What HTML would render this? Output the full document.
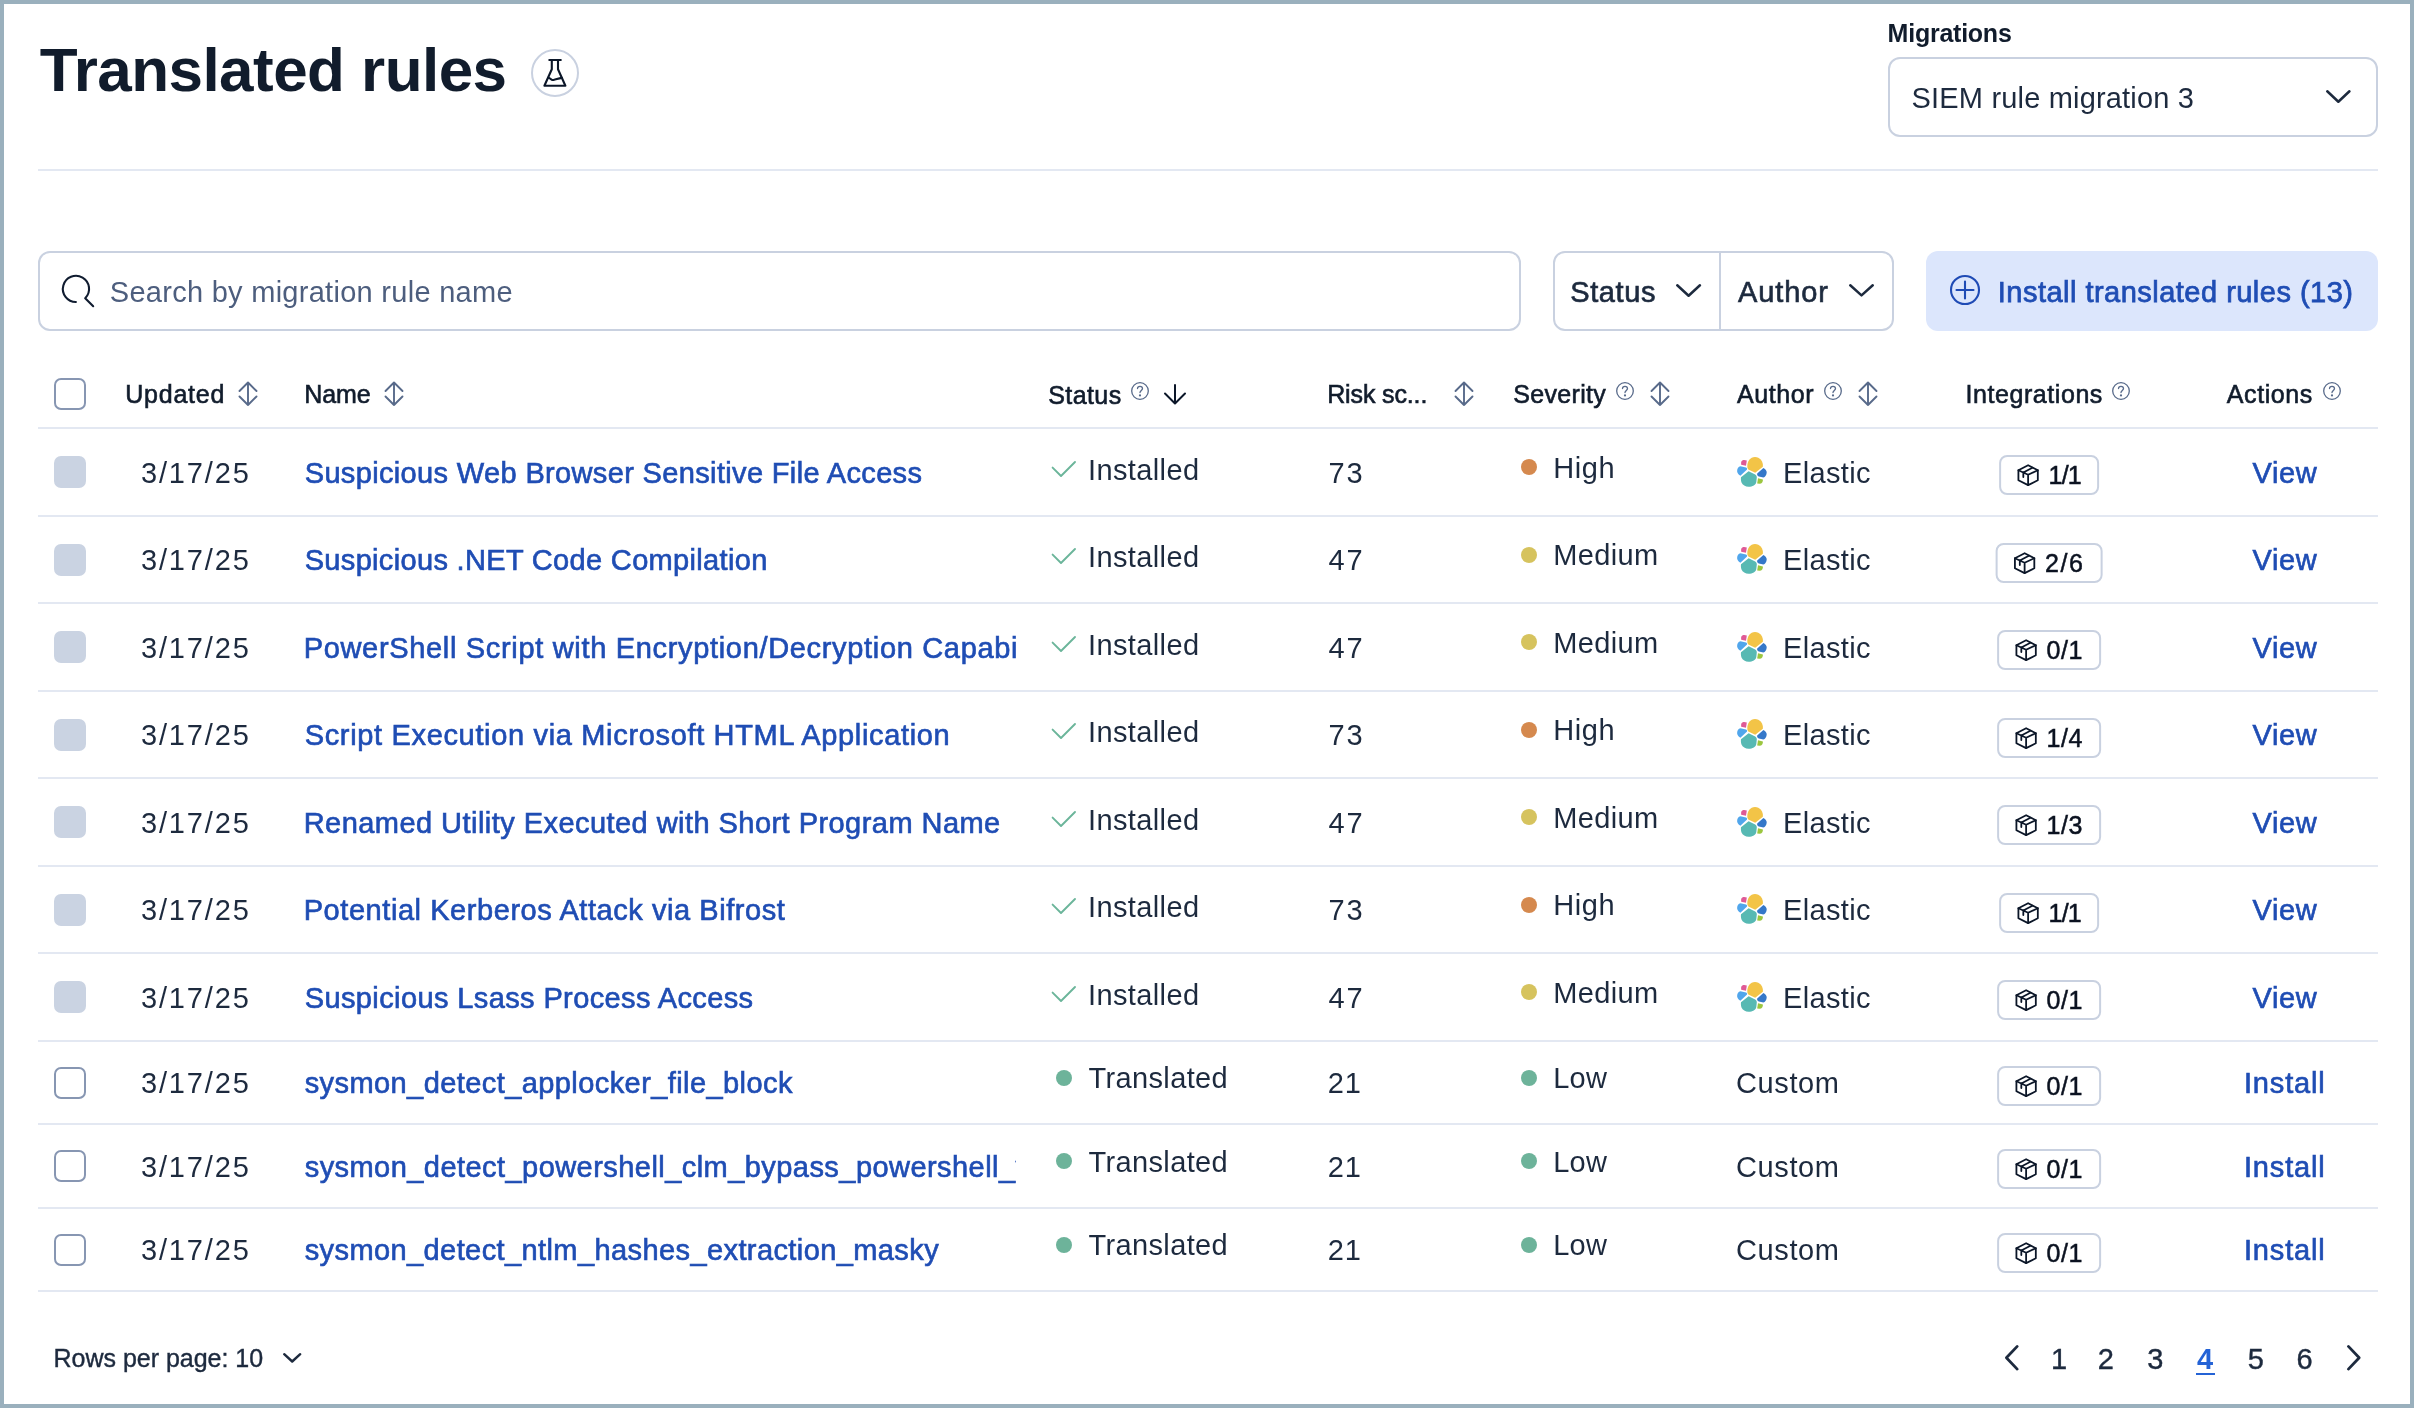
<!DOCTYPE html>
<html><head><meta charset="utf-8"><title>Translated rules</title>
<style>
html,body{margin:0;padding:0}
body{width:2414px;height:1408px;position:relative;overflow:hidden;background:#9AB0BD;font-family:"Liberation Sans", sans-serif}
#panel{position:absolute;left:4px;top:4px;width:2406px;height:1400px;background:#FFFFFF}
#root{position:absolute;left:0;top:0;width:2414px;height:1408px;will-change:transform}
.t{position:absolute;white-space:nowrap}
svg{overflow:visible}
</style></head><body>
<div id="panel"></div>
<div id="root"><div class="t" style="left:39.80px;top:39px;font-size:62px;line-height:62px;color:#111C2C;font-weight:700;letter-spacing:-0.553px;">Translated rules</div>
<div style="position:absolute;left:531px;top:49px;width:48px;height:48px;box-sizing:border-box;border:2px solid #C9D1E0;border-radius:50%"></div>
<svg style="position:absolute;left:531px;top:49px;" width="48" height="48" viewBox="0 0 48 48" fill="none"><g stroke="#0B1628" stroke-width="2.1" stroke-linejoin="round" stroke-linecap="round"><path d="M18.3 11 H29.8"/><path d="M20.8 11 V20.3 L13.4 36.8 H34.4 L27 20.3 V11"/><path d="M17.4 28.8 C19.5 29.3 20.8 31.3 22.5 31 C25.5 30.5 27 29.3 30.8 28.9"/></g></svg>
<div class="t" style="left:1887.60px;top:21px;font-size:25px;line-height:25px;color:#111C2C;font-weight:700;letter-spacing:-0.244px;">Migrations</div>
<div style="position:absolute;left:1888px;top:57px;width:490px;height:80px;box-sizing:border-box;border:2px solid #C9D1E0;border-radius:12px;background:#fff"></div>
<div class="t" style="left:1911.60px;top:84px;font-size:29px;line-height:29px;color:#1D2A3E;font-weight:400;letter-spacing:0.175px;">SIEM rule migration 3</div>
<svg style="position:absolute;left:2325.6px;top:90.1px;" width="25" height="13" viewBox="0 0 25 13" fill="none"><path d="M1.25 1.25 L12.35 11.75 L23.45 1.25" stroke="#1D2A3E" stroke-width="2.5" stroke-linecap="round" stroke-linejoin="round"/></svg>
<div style="position:absolute;left:38px;top:169px;width:2340px;height:2px;box-sizing:border-box;background:#E3E8F2"></div>
<div style="position:absolute;left:38px;top:251px;width:1483px;height:80px;box-sizing:border-box;border:2px solid #C9D1E0;border-radius:12px;background:#fff"></div>
<svg style="position:absolute;left:55px;top:268px;" width="46" height="46" viewBox="0 0 46 46" fill="none"><path d="M20.9 34 A13.1 13.1 0 1 1 30.2 30.2 L38.2 38.2" stroke="#101C30" stroke-width="2.1" stroke-linecap="round" stroke-linejoin="round"/></svg>
<div class="t" style="left:109.80px;top:278px;font-size:29px;line-height:29px;color:#4D5E7E;font-weight:400;letter-spacing:0.279px;">Search by migration rule name</div>
<div style="position:absolute;left:1553px;top:251px;width:341px;height:80px;box-sizing:border-box;border:2px solid #C9D1E0;border-radius:12px;background:#fff"></div>
<div style="position:absolute;left:1719px;top:251px;width:2px;height:80px;box-sizing:border-box;background:#C9D1E0"></div>
<div class="t" style="left:1570.20px;top:278px;font-size:29px;line-height:29px;color:#1D2A3E;font-weight:400;letter-spacing:0.600px;-webkit-text-stroke:0.65px #1D2A3E;">Status</div>
<svg style="position:absolute;left:1676.1px;top:284.1px;" width="26" height="13" viewBox="0 0 26 13" fill="none"><path d="M1.25 1.25 L12.60 11.75 L23.95 1.25" stroke="#1D2A3E" stroke-width="2.5" stroke-linecap="round" stroke-linejoin="round"/></svg>
<div class="t" style="left:1738.00px;top:278px;font-size:29px;line-height:29px;color:#1D2A3E;font-weight:400;letter-spacing:0.900px;-webkit-text-stroke:0.65px #1D2A3E;">Author</div>
<svg style="position:absolute;left:1849.3px;top:284.4px;" width="25" height="13" viewBox="0 0 25 13" fill="none"><path d="M1.25 1.25 L12.50 11.35 L23.75 1.25" stroke="#1D2A3E" stroke-width="2.5" stroke-linecap="round" stroke-linejoin="round"/></svg>
<div style="position:absolute;left:1926px;top:251px;width:452px;height:80px;box-sizing:border-box;background:#DCE6FC;border-radius:12px"></div>
<svg style="position:absolute;left:1946px;top:271px;" width="38" height="38" viewBox="0 0 38 38" fill="none"><g stroke="#1F4BB5" stroke-width="2.1" stroke-linecap="round"><circle cx="19" cy="19" r="14"/><path d="M19 10.5 V27.5 M10.5 19 H27.5"/></g></svg>
<div class="t" style="left:1997.80px;top:278px;font-size:29px;line-height:29px;color:#1F4DB4;font-weight:400;letter-spacing:0.479px;-webkit-text-stroke:0.75px #1F4DB4;">Install translated rules (13)</div>
<div style="position:absolute;left:54px;top:378px;width:32px;height:32px;box-sizing:border-box;border:2px solid #8796B2;border-radius:7px;background:#fff"></div>
<div class="t" style="left:125.20px;top:382px;font-size:25px;line-height:25px;color:#111C2C;font-weight:400;letter-spacing:0.783px;-webkit-text-stroke:0.6px #111C2C;">Updated</div>
<svg style="position:absolute;left:238px;top:381px;" width="20" height="26" viewBox="0 0 20 26" fill="none"><g stroke="#586A8A" stroke-width="1.9" stroke-linecap="round" stroke-linejoin="round"><path d="M1.5 10 L10 1.5 L18.5 10 M10 1.5 V24 M1.5 15.5 L10 24 L18.5 15.5"/></g></svg>
<div class="t" style="left:304.20px;top:382px;font-size:25px;line-height:25px;color:#111C2C;font-weight:400;letter-spacing:-0.033px;-webkit-text-stroke:0.6px #111C2C;">Name</div>
<svg style="position:absolute;left:384px;top:381px;" width="20" height="26" viewBox="0 0 20 26" fill="none"><g stroke="#586A8A" stroke-width="1.9" stroke-linecap="round" stroke-linejoin="round"><path d="M1.5 10 L10 1.5 L18.5 10 M10 1.5 V24 M1.5 15.5 L10 24 L18.5 15.5"/></g></svg>
<div class="t" style="left:1048.20px;top:383px;font-size:25px;line-height:25px;color:#111C2C;font-weight:400;letter-spacing:0.420px;-webkit-text-stroke:0.6px #111C2C;">Status</div>
<svg style="position:absolute;left:1129.8px;top:381px;" width="20" height="20" viewBox="0 0 20 20" fill="none"><g stroke="#586A8A" stroke-width="1.3" stroke-linecap="round"><circle cx="10" cy="10" r="8.3"/><path d="M7.5 7.6 C7.5 4.6 12.5 4.6 12.5 7.6 C12.5 9.3 10 9.6 10 11.6"/></g><circle cx="10" cy="14.4" r="1.1" fill="#586A8A"/></svg>
<svg style="position:absolute;left:1162px;top:382px;" width="26" height="24" viewBox="0 0 26 24" fill="none"><g stroke="#0B1628" stroke-width="2" stroke-linecap="round" stroke-linejoin="round"><path d="M13 3 V21 M3 11.5 L13 21.5 L23 11.5"/></g></svg>
<div class="t" style="left:1327.20px;top:382px;font-size:25px;line-height:25px;color:#111C2C;font-weight:400;letter-spacing:-0.133px;-webkit-text-stroke:0.6px #111C2C;">Risk sc...</div>
<svg style="position:absolute;left:1454px;top:381px;" width="20" height="26" viewBox="0 0 20 26" fill="none"><g stroke="#586A8A" stroke-width="1.9" stroke-linecap="round" stroke-linejoin="round"><path d="M1.5 10 L10 1.5 L18.5 10 M10 1.5 V24 M1.5 15.5 L10 24 L18.5 15.5"/></g></svg>
<div class="t" style="left:1513.20px;top:382px;font-size:25px;line-height:25px;color:#111C2C;font-weight:400;letter-spacing:0.329px;-webkit-text-stroke:0.6px #111C2C;">Severity</div>
<svg style="position:absolute;left:1615px;top:381px;" width="20" height="20" viewBox="0 0 20 20" fill="none"><g stroke="#586A8A" stroke-width="1.3" stroke-linecap="round"><circle cx="10" cy="10" r="8.3"/><path d="M7.5 7.6 C7.5 4.6 12.5 4.6 12.5 7.6 C12.5 9.3 10 9.6 10 11.6"/></g><circle cx="10" cy="14.4" r="1.1" fill="#586A8A"/></svg>
<svg style="position:absolute;left:1650px;top:381px;" width="20" height="26" viewBox="0 0 20 26" fill="none"><g stroke="#586A8A" stroke-width="1.9" stroke-linecap="round" stroke-linejoin="round"><path d="M1.5 10 L10 1.5 L18.5 10 M10 1.5 V24 M1.5 15.5 L10 24 L18.5 15.5"/></g></svg>
<div class="t" style="left:1737.00px;top:382px;font-size:25px;line-height:25px;color:#111C2C;font-weight:400;letter-spacing:0.560px;-webkit-text-stroke:0.6px #111C2C;">Author</div>
<svg style="position:absolute;left:1823px;top:381px;" width="20" height="20" viewBox="0 0 20 20" fill="none"><g stroke="#586A8A" stroke-width="1.3" stroke-linecap="round"><circle cx="10" cy="10" r="8.3"/><path d="M7.5 7.6 C7.5 4.6 12.5 4.6 12.5 7.6 C12.5 9.3 10 9.6 10 11.6"/></g><circle cx="10" cy="14.4" r="1.1" fill="#586A8A"/></svg>
<svg style="position:absolute;left:1858px;top:381px;" width="20" height="26" viewBox="0 0 20 26" fill="none"><g stroke="#586A8A" stroke-width="1.9" stroke-linecap="round" stroke-linejoin="round"><path d="M1.5 10 L10 1.5 L18.5 10 M10 1.5 V24 M1.5 15.5 L10 24 L18.5 15.5"/></g></svg>
<div class="t" style="left:1965.60px;top:382px;font-size:25px;line-height:25px;color:#111C2C;font-weight:400;letter-spacing:0.555px;-webkit-text-stroke:0.6px #111C2C;">Integrations</div>
<svg style="position:absolute;left:2111px;top:381px;" width="20" height="20" viewBox="0 0 20 20" fill="none"><g stroke="#586A8A" stroke-width="1.3" stroke-linecap="round"><circle cx="10" cy="10" r="8.3"/><path d="M7.5 7.6 C7.5 4.6 12.5 4.6 12.5 7.6 C12.5 9.3 10 9.6 10 11.6"/></g><circle cx="10" cy="14.4" r="1.1" fill="#586A8A"/></svg>
<div class="t" style="left:2226.80px;top:382px;font-size:25px;line-height:25px;color:#111C2C;font-weight:400;letter-spacing:0.583px;-webkit-text-stroke:0.6px #111C2C;">Actions</div>
<svg style="position:absolute;left:2322px;top:381px;" width="20" height="20" viewBox="0 0 20 20" fill="none"><g stroke="#586A8A" stroke-width="1.3" stroke-linecap="round"><circle cx="10" cy="10" r="8.3"/><path d="M7.5 7.6 C7.5 4.6 12.5 4.6 12.5 7.6 C12.5 9.3 10 9.6 10 11.6"/></g><circle cx="10" cy="14.4" r="1.1" fill="#586A8A"/></svg>
<div style="position:absolute;left:38px;top:427px;width:2340px;height:2px;box-sizing:border-box;background:#E3E8F2"></div>
<div style="position:absolute;left:54px;top:456px;width:32px;height:32px;box-sizing:border-box;background:#CAD3E2;border-radius:7px"></div>
<div class="t" style="left:140.90px;top:459px;font-size:29px;line-height:29px;color:#1D2A3E;font-weight:400;letter-spacing:1.875px;">3/17/25</div>
<div style="position:absolute;left:290px;top:429px;width:726px;height:86px;overflow:hidden"><div class="t" style="left:14.70px;top:30px;font-size:29px;line-height:29px;color:#1F4DB4;font-weight:400;-webkit-text-stroke:0.65px #1F4DB4;letter-spacing:0.349px">Suspicious Web Browser Sensitive File Access</div></div>
<svg style="position:absolute;left:1050px;top:460px;" width="28" height="20" viewBox="0 0 28 20" fill="none"><path d="M2.6 7.6 L11 16 L25 2" stroke="#6BB59A" stroke-width="1.9" stroke-linecap="round" stroke-linejoin="round"/></svg>
<div class="t" style="left:1088.00px;top:456px;font-size:29px;line-height:29px;color:#1D2A3E;font-weight:400;letter-spacing:0.375px;">Installed</div>
<div class="t" style="left:1328.40px;top:459px;font-size:29px;line-height:29px;color:#1D2A3E;font-weight:400;letter-spacing:1.900px;">73</div>
<div style="position:absolute;left:1521px;top:459.0px;width:16px;height:16px;border-radius:50%;background:#D5894E"></div>
<div class="t" style="left:1553.20px;top:454px;font-size:29px;line-height:29px;color:#1D2A3E;font-weight:400;letter-spacing:0.600px;">High</div>
<svg style="position:absolute;left:1737px;top:457px;" width="31" height="31" viewBox="0 0 31 31" fill="none"><path d="M18 0.1 C13 0.1 10.3 4.5 10.3 9.3 C10.3 10.8 10.8 12 11.3 12.6 L18.2 15.7 L25.9 9.8 C26.4 4.5 22.8 0.1 18 0.1 Z" fill="#F3C447"/><path d="M4.4 4.4 C5.2 3.3 6.2 2.9 7.2 2.9 L9.8 3.4 L9 8.8 L4.2 7.8 C4 6.5 4.1 5 4.4 4.4 Z" fill="#DF5A96"/><path d="M3.4 9.3 L9 10.6 C10.3 11.2 10.2 12.2 9.8 12.8 L3.4 18.8 C1.2 17.5 0.1 15.5 0.1 13.9 C0.1 11.5 1.5 9.5 3.4 9.3 Z" fill="#51A6EC"/><path d="M11.6 14.2 L18.2 17.4 C19.5 18.3 19.9 19.5 19.8 20.5 L19.3 25 C19 28 15.5 29.8 11.6 29.8 C8.5 29.8 5.5 27.8 4.5 25.5 C3.8 23.5 3.8 21.5 4.0 20.2 Z" fill="#57B9B3"/><path d="M26.4 11.1 C28 11.8 29.7 13.5 29.7 15.4 C29.7 18 28 20 26.4 20.6 L21.8 19.6 C20.5 19.2 19.8 17.8 20.2 16.6 Z" fill="#3578C9"/><path d="M21 21.3 L25.9 22.4 C26.2 24.5 24.8 26.7 22.5 26.7 L20.2 26.6 Z" fill="#9BC63F"/></svg>
<div class="t" style="left:1783.00px;top:459px;font-size:29px;line-height:29px;color:#1D2A3E;font-weight:400;letter-spacing:0.350px;">Elastic</div>
<div style="position:absolute;left:2049px;top:455px;height:40px;transform:translateX(-50%);box-sizing:border-box;border:2px solid #C9D1E0;border-radius:8px;background:#fff;display:flex;align-items:center;padding:0 16px 0 16px"><svg width="22" height="23" viewBox="0 0 22 23" fill="none" style="display:block;flex:none"><g stroke="#0B1628" stroke-width="1.8" stroke-linejoin="round" stroke-linecap="round"><path d="M1.3 6.2 L11 1.2 L20.7 6.2 V16.3 L11 21.1 L1.3 16.3 Z"/><path d="M1.3 6.2 L11 10.8 L20.7 6.2 M11 10.8 V21.1 M6.2 8.5 L15.3 3.7 M6.2 8.5 V13"/></g></svg><span style="display:block;margin-left:9.5px;font-size:25px;line-height:25px;height:25px;position:relative;top:0.5px;color:#0B1220;letter-spacing:-0.83px;-webkit-text-stroke:0.5px #0B1220;white-space:nowrap">1/1</span></div>
<div class="t" style="left:2252.60px;top:459px;font-size:29px;line-height:29px;color:#1F4DB4;font-weight:400;letter-spacing:0.567px;-webkit-text-stroke:0.65px #1F4DB4;">View</div>
<div style="position:absolute;left:38px;top:515px;width:2340px;height:2px;box-sizing:border-box;background:#E3E8F2"></div>
<div style="position:absolute;left:54px;top:544px;width:32px;height:32px;box-sizing:border-box;background:#CAD3E2;border-radius:7px"></div>
<div class="t" style="left:140.90px;top:546px;font-size:29px;line-height:29px;color:#1D2A3E;font-weight:400;letter-spacing:1.875px;">3/17/25</div>
<div style="position:absolute;left:290px;top:517px;width:726px;height:85px;overflow:hidden"><div class="t" style="left:14.70px;top:29px;font-size:29px;line-height:29px;color:#1F4DB4;font-weight:400;-webkit-text-stroke:0.65px #1F4DB4;letter-spacing:0.329px">Suspicious .NET Code Compilation</div></div>
<svg style="position:absolute;left:1050px;top:547px;" width="28" height="20" viewBox="0 0 28 20" fill="none"><path d="M2.6 7.6 L11 16 L25 2" stroke="#6BB59A" stroke-width="1.9" stroke-linecap="round" stroke-linejoin="round"/></svg>
<div class="t" style="left:1088.00px;top:543px;font-size:29px;line-height:29px;color:#1D2A3E;font-weight:400;letter-spacing:0.375px;">Installed</div>
<div class="t" style="left:1328.40px;top:546px;font-size:29px;line-height:29px;color:#1D2A3E;font-weight:400;letter-spacing:1.900px;">47</div>
<div style="position:absolute;left:1521px;top:546.5px;width:16px;height:16px;border-radius:50%;background:#D6C35E"></div>
<div class="t" style="left:1553.20px;top:541px;font-size:29px;line-height:29px;color:#1D2A3E;font-weight:400;letter-spacing:0.360px;">Medium</div>
<svg style="position:absolute;left:1737px;top:544px;" width="31" height="31" viewBox="0 0 31 31" fill="none"><path d="M18 0.1 C13 0.1 10.3 4.5 10.3 9.3 C10.3 10.8 10.8 12 11.3 12.6 L18.2 15.7 L25.9 9.8 C26.4 4.5 22.8 0.1 18 0.1 Z" fill="#F3C447"/><path d="M4.4 4.4 C5.2 3.3 6.2 2.9 7.2 2.9 L9.8 3.4 L9 8.8 L4.2 7.8 C4 6.5 4.1 5 4.4 4.4 Z" fill="#DF5A96"/><path d="M3.4 9.3 L9 10.6 C10.3 11.2 10.2 12.2 9.8 12.8 L3.4 18.8 C1.2 17.5 0.1 15.5 0.1 13.9 C0.1 11.5 1.5 9.5 3.4 9.3 Z" fill="#51A6EC"/><path d="M11.6 14.2 L18.2 17.4 C19.5 18.3 19.9 19.5 19.8 20.5 L19.3 25 C19 28 15.5 29.8 11.6 29.8 C8.5 29.8 5.5 27.8 4.5 25.5 C3.8 23.5 3.8 21.5 4.0 20.2 Z" fill="#57B9B3"/><path d="M26.4 11.1 C28 11.8 29.7 13.5 29.7 15.4 C29.7 18 28 20 26.4 20.6 L21.8 19.6 C20.5 19.2 19.8 17.8 20.2 16.6 Z" fill="#3578C9"/><path d="M21 21.3 L25.9 22.4 C26.2 24.5 24.8 26.7 22.5 26.7 L20.2 26.6 Z" fill="#9BC63F"/></svg>
<div class="t" style="left:1783.00px;top:546px;font-size:29px;line-height:29px;color:#1D2A3E;font-weight:400;letter-spacing:0.350px;">Elastic</div>
<div style="position:absolute;left:2049px;top:543px;height:40px;transform:translateX(-50%);box-sizing:border-box;border:2px solid #C9D1E0;border-radius:8px;background:#fff;display:flex;align-items:center;padding:0 16px 0 16px"><svg width="22" height="23" viewBox="0 0 22 23" fill="none" style="display:block;flex:none"><g stroke="#0B1628" stroke-width="1.8" stroke-linejoin="round" stroke-linecap="round"><path d="M1.3 6.2 L11 1.2 L20.7 6.2 V16.3 L11 21.1 L1.3 16.3 Z"/><path d="M1.3 6.2 L11 10.8 L20.7 6.2 M11 10.8 V21.1 M6.2 8.5 L15.3 3.7 M6.2 8.5 V13"/></g></svg><span style="display:block;margin-left:9.5px;font-size:25px;line-height:25px;height:25px;position:relative;top:0.5px;color:#0B1220;letter-spacing:1.5px;-webkit-text-stroke:0.5px #0B1220;white-space:nowrap">2/6</span></div>
<div class="t" style="left:2252.60px;top:546px;font-size:29px;line-height:29px;color:#1F4DB4;font-weight:400;letter-spacing:0.567px;-webkit-text-stroke:0.65px #1F4DB4;">View</div>
<div style="position:absolute;left:38px;top:602px;width:2340px;height:2px;box-sizing:border-box;background:#E3E8F2"></div>
<div style="position:absolute;left:54px;top:631px;width:32px;height:32px;box-sizing:border-box;background:#CAD3E2;border-radius:7px"></div>
<div class="t" style="left:140.90px;top:634px;font-size:29px;line-height:29px;color:#1D2A3E;font-weight:400;letter-spacing:1.875px;">3/17/25</div>
<div style="position:absolute;left:290px;top:604px;width:726px;height:86px;overflow:hidden"><div class="t" style="left:13.70px;top:30px;font-size:29px;line-height:29px;color:#1F4DB4;font-weight:400;-webkit-text-stroke:0.65px #1F4DB4;letter-spacing:0.672px">PowerShell Script with Encryption/Decryption Capabilities</div></div>
<svg style="position:absolute;left:1050px;top:635px;" width="28" height="20" viewBox="0 0 28 20" fill="none"><path d="M2.6 7.6 L11 16 L25 2" stroke="#6BB59A" stroke-width="1.9" stroke-linecap="round" stroke-linejoin="round"/></svg>
<div class="t" style="left:1088.00px;top:631px;font-size:29px;line-height:29px;color:#1D2A3E;font-weight:400;letter-spacing:0.375px;">Installed</div>
<div class="t" style="left:1328.40px;top:634px;font-size:29px;line-height:29px;color:#1D2A3E;font-weight:400;letter-spacing:1.900px;">47</div>
<div style="position:absolute;left:1521px;top:634.0px;width:16px;height:16px;border-radius:50%;background:#D6C35E"></div>
<div class="t" style="left:1553.20px;top:629px;font-size:29px;line-height:29px;color:#1D2A3E;font-weight:400;letter-spacing:0.360px;">Medium</div>
<svg style="position:absolute;left:1737px;top:632px;" width="31" height="31" viewBox="0 0 31 31" fill="none"><path d="M18 0.1 C13 0.1 10.3 4.5 10.3 9.3 C10.3 10.8 10.8 12 11.3 12.6 L18.2 15.7 L25.9 9.8 C26.4 4.5 22.8 0.1 18 0.1 Z" fill="#F3C447"/><path d="M4.4 4.4 C5.2 3.3 6.2 2.9 7.2 2.9 L9.8 3.4 L9 8.8 L4.2 7.8 C4 6.5 4.1 5 4.4 4.4 Z" fill="#DF5A96"/><path d="M3.4 9.3 L9 10.6 C10.3 11.2 10.2 12.2 9.8 12.8 L3.4 18.8 C1.2 17.5 0.1 15.5 0.1 13.9 C0.1 11.5 1.5 9.5 3.4 9.3 Z" fill="#51A6EC"/><path d="M11.6 14.2 L18.2 17.4 C19.5 18.3 19.9 19.5 19.8 20.5 L19.3 25 C19 28 15.5 29.8 11.6 29.8 C8.5 29.8 5.5 27.8 4.5 25.5 C3.8 23.5 3.8 21.5 4.0 20.2 Z" fill="#57B9B3"/><path d="M26.4 11.1 C28 11.8 29.7 13.5 29.7 15.4 C29.7 18 28 20 26.4 20.6 L21.8 19.6 C20.5 19.2 19.8 17.8 20.2 16.6 Z" fill="#3578C9"/><path d="M21 21.3 L25.9 22.4 C26.2 24.5 24.8 26.7 22.5 26.7 L20.2 26.6 Z" fill="#9BC63F"/></svg>
<div class="t" style="left:1783.00px;top:634px;font-size:29px;line-height:29px;color:#1D2A3E;font-weight:400;letter-spacing:0.350px;">Elastic</div>
<div style="position:absolute;left:2049px;top:630px;height:40px;transform:translateX(-50%);box-sizing:border-box;border:2px solid #C9D1E0;border-radius:8px;background:#fff;display:flex;align-items:center;padding:0 16px 0 16px"><svg width="22" height="23" viewBox="0 0 22 23" fill="none" style="display:block;flex:none"><g stroke="#0B1628" stroke-width="1.8" stroke-linejoin="round" stroke-linecap="round"><path d="M1.3 6.2 L11 1.2 L20.7 6.2 V16.3 L11 21.1 L1.3 16.3 Z"/><path d="M1.3 6.2 L11 10.8 L20.7 6.2 M11 10.8 V21.1 M6.2 8.5 L15.3 3.7 M6.2 8.5 V13"/></g></svg><span style="display:block;margin-left:9.5px;font-size:25px;line-height:25px;height:25px;position:relative;top:0.5px;color:#0B1220;letter-spacing:0.5px;-webkit-text-stroke:0.5px #0B1220;white-space:nowrap">0/1</span></div>
<div class="t" style="left:2252.60px;top:634px;font-size:29px;line-height:29px;color:#1F4DB4;font-weight:400;letter-spacing:0.567px;-webkit-text-stroke:0.65px #1F4DB4;">View</div>
<div style="position:absolute;left:38px;top:690px;width:2340px;height:2px;box-sizing:border-box;background:#E3E8F2"></div>
<div style="position:absolute;left:54px;top:719px;width:32px;height:32px;box-sizing:border-box;background:#CAD3E2;border-radius:7px"></div>
<div class="t" style="left:140.90px;top:721px;font-size:29px;line-height:29px;color:#1D2A3E;font-weight:400;letter-spacing:1.875px;">3/17/25</div>
<div style="position:absolute;left:290px;top:692px;width:726px;height:85px;overflow:hidden"><div class="t" style="left:14.70px;top:29px;font-size:29px;line-height:29px;color:#1F4DB4;font-weight:400;-webkit-text-stroke:0.65px #1F4DB4;letter-spacing:0.661px">Script Execution via Microsoft HTML Application</div></div>
<svg style="position:absolute;left:1050px;top:722px;" width="28" height="20" viewBox="0 0 28 20" fill="none"><path d="M2.6 7.6 L11 16 L25 2" stroke="#6BB59A" stroke-width="1.9" stroke-linecap="round" stroke-linejoin="round"/></svg>
<div class="t" style="left:1088.00px;top:718px;font-size:29px;line-height:29px;color:#1D2A3E;font-weight:400;letter-spacing:0.375px;">Installed</div>
<div class="t" style="left:1328.40px;top:721px;font-size:29px;line-height:29px;color:#1D2A3E;font-weight:400;letter-spacing:1.900px;">73</div>
<div style="position:absolute;left:1521px;top:721.5px;width:16px;height:16px;border-radius:50%;background:#D5894E"></div>
<div class="t" style="left:1553.20px;top:716px;font-size:29px;line-height:29px;color:#1D2A3E;font-weight:400;letter-spacing:0.600px;">High</div>
<svg style="position:absolute;left:1737px;top:719px;" width="31" height="31" viewBox="0 0 31 31" fill="none"><path d="M18 0.1 C13 0.1 10.3 4.5 10.3 9.3 C10.3 10.8 10.8 12 11.3 12.6 L18.2 15.7 L25.9 9.8 C26.4 4.5 22.8 0.1 18 0.1 Z" fill="#F3C447"/><path d="M4.4 4.4 C5.2 3.3 6.2 2.9 7.2 2.9 L9.8 3.4 L9 8.8 L4.2 7.8 C4 6.5 4.1 5 4.4 4.4 Z" fill="#DF5A96"/><path d="M3.4 9.3 L9 10.6 C10.3 11.2 10.2 12.2 9.8 12.8 L3.4 18.8 C1.2 17.5 0.1 15.5 0.1 13.9 C0.1 11.5 1.5 9.5 3.4 9.3 Z" fill="#51A6EC"/><path d="M11.6 14.2 L18.2 17.4 C19.5 18.3 19.9 19.5 19.8 20.5 L19.3 25 C19 28 15.5 29.8 11.6 29.8 C8.5 29.8 5.5 27.8 4.5 25.5 C3.8 23.5 3.8 21.5 4.0 20.2 Z" fill="#57B9B3"/><path d="M26.4 11.1 C28 11.8 29.7 13.5 29.7 15.4 C29.7 18 28 20 26.4 20.6 L21.8 19.6 C20.5 19.2 19.8 17.8 20.2 16.6 Z" fill="#3578C9"/><path d="M21 21.3 L25.9 22.4 C26.2 24.5 24.8 26.7 22.5 26.7 L20.2 26.6 Z" fill="#9BC63F"/></svg>
<div class="t" style="left:1783.00px;top:721px;font-size:29px;line-height:29px;color:#1D2A3E;font-weight:400;letter-spacing:0.350px;">Elastic</div>
<div style="position:absolute;left:2049px;top:718px;height:40px;transform:translateX(-50%);box-sizing:border-box;border:2px solid #C9D1E0;border-radius:8px;background:#fff;display:flex;align-items:center;padding:0 16px 0 16px"><svg width="22" height="23" viewBox="0 0 22 23" fill="none" style="display:block;flex:none"><g stroke="#0B1628" stroke-width="1.8" stroke-linejoin="round" stroke-linecap="round"><path d="M1.3 6.2 L11 1.2 L20.7 6.2 V16.3 L11 21.1 L1.3 16.3 Z"/><path d="M1.3 6.2 L11 10.8 L20.7 6.2 M11 10.8 V21.1 M6.2 8.5 L15.3 3.7 M6.2 8.5 V13"/></g></svg><span style="display:block;margin-left:9.5px;font-size:25px;line-height:25px;height:25px;position:relative;top:0.5px;color:#0B1220;letter-spacing:0.5px;-webkit-text-stroke:0.5px #0B1220;white-space:nowrap">1/4</span></div>
<div class="t" style="left:2252.60px;top:721px;font-size:29px;line-height:29px;color:#1F4DB4;font-weight:400;letter-spacing:0.567px;-webkit-text-stroke:0.65px #1F4DB4;">View</div>
<div style="position:absolute;left:38px;top:777px;width:2340px;height:2px;box-sizing:border-box;background:#E3E8F2"></div>
<div style="position:absolute;left:54px;top:806px;width:32px;height:32px;box-sizing:border-box;background:#CAD3E2;border-radius:7px"></div>
<div class="t" style="left:140.90px;top:809px;font-size:29px;line-height:29px;color:#1D2A3E;font-weight:400;letter-spacing:1.875px;">3/17/25</div>
<div style="position:absolute;left:290px;top:779px;width:726px;height:86px;overflow:hidden"><div class="t" style="left:13.70px;top:30px;font-size:29px;line-height:29px;color:#1F4DB4;font-weight:400;-webkit-text-stroke:0.65px #1F4DB4;letter-spacing:0.451px">Renamed Utility Executed with Short Program Name</div></div>
<svg style="position:absolute;left:1050px;top:810px;" width="28" height="20" viewBox="0 0 28 20" fill="none"><path d="M2.6 7.6 L11 16 L25 2" stroke="#6BB59A" stroke-width="1.9" stroke-linecap="round" stroke-linejoin="round"/></svg>
<div class="t" style="left:1088.00px;top:806px;font-size:29px;line-height:29px;color:#1D2A3E;font-weight:400;letter-spacing:0.375px;">Installed</div>
<div class="t" style="left:1328.40px;top:809px;font-size:29px;line-height:29px;color:#1D2A3E;font-weight:400;letter-spacing:1.900px;">47</div>
<div style="position:absolute;left:1521px;top:809.0px;width:16px;height:16px;border-radius:50%;background:#D6C35E"></div>
<div class="t" style="left:1553.20px;top:804px;font-size:29px;line-height:29px;color:#1D2A3E;font-weight:400;letter-spacing:0.360px;">Medium</div>
<svg style="position:absolute;left:1737px;top:807px;" width="31" height="31" viewBox="0 0 31 31" fill="none"><path d="M18 0.1 C13 0.1 10.3 4.5 10.3 9.3 C10.3 10.8 10.8 12 11.3 12.6 L18.2 15.7 L25.9 9.8 C26.4 4.5 22.8 0.1 18 0.1 Z" fill="#F3C447"/><path d="M4.4 4.4 C5.2 3.3 6.2 2.9 7.2 2.9 L9.8 3.4 L9 8.8 L4.2 7.8 C4 6.5 4.1 5 4.4 4.4 Z" fill="#DF5A96"/><path d="M3.4 9.3 L9 10.6 C10.3 11.2 10.2 12.2 9.8 12.8 L3.4 18.8 C1.2 17.5 0.1 15.5 0.1 13.9 C0.1 11.5 1.5 9.5 3.4 9.3 Z" fill="#51A6EC"/><path d="M11.6 14.2 L18.2 17.4 C19.5 18.3 19.9 19.5 19.8 20.5 L19.3 25 C19 28 15.5 29.8 11.6 29.8 C8.5 29.8 5.5 27.8 4.5 25.5 C3.8 23.5 3.8 21.5 4.0 20.2 Z" fill="#57B9B3"/><path d="M26.4 11.1 C28 11.8 29.7 13.5 29.7 15.4 C29.7 18 28 20 26.4 20.6 L21.8 19.6 C20.5 19.2 19.8 17.8 20.2 16.6 Z" fill="#3578C9"/><path d="M21 21.3 L25.9 22.4 C26.2 24.5 24.8 26.7 22.5 26.7 L20.2 26.6 Z" fill="#9BC63F"/></svg>
<div class="t" style="left:1783.00px;top:809px;font-size:29px;line-height:29px;color:#1D2A3E;font-weight:400;letter-spacing:0.350px;">Elastic</div>
<div style="position:absolute;left:2049px;top:805px;height:40px;transform:translateX(-50%);box-sizing:border-box;border:2px solid #C9D1E0;border-radius:8px;background:#fff;display:flex;align-items:center;padding:0 16px 0 16px"><svg width="22" height="23" viewBox="0 0 22 23" fill="none" style="display:block;flex:none"><g stroke="#0B1628" stroke-width="1.8" stroke-linejoin="round" stroke-linecap="round"><path d="M1.3 6.2 L11 1.2 L20.7 6.2 V16.3 L11 21.1 L1.3 16.3 Z"/><path d="M1.3 6.2 L11 10.8 L20.7 6.2 M11 10.8 V21.1 M6.2 8.5 L15.3 3.7 M6.2 8.5 V13"/></g></svg><span style="display:block;margin-left:9.5px;font-size:25px;line-height:25px;height:25px;position:relative;top:0.5px;color:#0B1220;letter-spacing:0.5px;-webkit-text-stroke:0.5px #0B1220;white-space:nowrap">1/3</span></div>
<div class="t" style="left:2252.60px;top:809px;font-size:29px;line-height:29px;color:#1F4DB4;font-weight:400;letter-spacing:0.567px;-webkit-text-stroke:0.65px #1F4DB4;">View</div>
<div style="position:absolute;left:38px;top:865px;width:2340px;height:2px;box-sizing:border-box;background:#E3E8F2"></div>
<div style="position:absolute;left:54px;top:894px;width:32px;height:32px;box-sizing:border-box;background:#CAD3E2;border-radius:7px"></div>
<div class="t" style="left:140.90px;top:896px;font-size:29px;line-height:29px;color:#1D2A3E;font-weight:400;letter-spacing:1.875px;">3/17/25</div>
<div style="position:absolute;left:290px;top:867px;width:726px;height:85px;overflow:hidden"><div class="t" style="left:13.70px;top:29px;font-size:29px;line-height:29px;color:#1F4DB4;font-weight:400;-webkit-text-stroke:0.65px #1F4DB4;letter-spacing:0.561px">Potential Kerberos Attack via Bifrost</div></div>
<svg style="position:absolute;left:1050px;top:897px;" width="28" height="20" viewBox="0 0 28 20" fill="none"><path d="M2.6 7.6 L11 16 L25 2" stroke="#6BB59A" stroke-width="1.9" stroke-linecap="round" stroke-linejoin="round"/></svg>
<div class="t" style="left:1088.00px;top:893px;font-size:29px;line-height:29px;color:#1D2A3E;font-weight:400;letter-spacing:0.375px;">Installed</div>
<div class="t" style="left:1328.40px;top:896px;font-size:29px;line-height:29px;color:#1D2A3E;font-weight:400;letter-spacing:1.900px;">73</div>
<div style="position:absolute;left:1521px;top:896.5px;width:16px;height:16px;border-radius:50%;background:#D5894E"></div>
<div class="t" style="left:1553.20px;top:891px;font-size:29px;line-height:29px;color:#1D2A3E;font-weight:400;letter-spacing:0.600px;">High</div>
<svg style="position:absolute;left:1737px;top:894px;" width="31" height="31" viewBox="0 0 31 31" fill="none"><path d="M18 0.1 C13 0.1 10.3 4.5 10.3 9.3 C10.3 10.8 10.8 12 11.3 12.6 L18.2 15.7 L25.9 9.8 C26.4 4.5 22.8 0.1 18 0.1 Z" fill="#F3C447"/><path d="M4.4 4.4 C5.2 3.3 6.2 2.9 7.2 2.9 L9.8 3.4 L9 8.8 L4.2 7.8 C4 6.5 4.1 5 4.4 4.4 Z" fill="#DF5A96"/><path d="M3.4 9.3 L9 10.6 C10.3 11.2 10.2 12.2 9.8 12.8 L3.4 18.8 C1.2 17.5 0.1 15.5 0.1 13.9 C0.1 11.5 1.5 9.5 3.4 9.3 Z" fill="#51A6EC"/><path d="M11.6 14.2 L18.2 17.4 C19.5 18.3 19.9 19.5 19.8 20.5 L19.3 25 C19 28 15.5 29.8 11.6 29.8 C8.5 29.8 5.5 27.8 4.5 25.5 C3.8 23.5 3.8 21.5 4.0 20.2 Z" fill="#57B9B3"/><path d="M26.4 11.1 C28 11.8 29.7 13.5 29.7 15.4 C29.7 18 28 20 26.4 20.6 L21.8 19.6 C20.5 19.2 19.8 17.8 20.2 16.6 Z" fill="#3578C9"/><path d="M21 21.3 L25.9 22.4 C26.2 24.5 24.8 26.7 22.5 26.7 L20.2 26.6 Z" fill="#9BC63F"/></svg>
<div class="t" style="left:1783.00px;top:896px;font-size:29px;line-height:29px;color:#1D2A3E;font-weight:400;letter-spacing:0.350px;">Elastic</div>
<div style="position:absolute;left:2049px;top:893px;height:40px;transform:translateX(-50%);box-sizing:border-box;border:2px solid #C9D1E0;border-radius:8px;background:#fff;display:flex;align-items:center;padding:0 16px 0 16px"><svg width="22" height="23" viewBox="0 0 22 23" fill="none" style="display:block;flex:none"><g stroke="#0B1628" stroke-width="1.8" stroke-linejoin="round" stroke-linecap="round"><path d="M1.3 6.2 L11 1.2 L20.7 6.2 V16.3 L11 21.1 L1.3 16.3 Z"/><path d="M1.3 6.2 L11 10.8 L20.7 6.2 M11 10.8 V21.1 M6.2 8.5 L15.3 3.7 M6.2 8.5 V13"/></g></svg><span style="display:block;margin-left:9.5px;font-size:25px;line-height:25px;height:25px;position:relative;top:0.5px;color:#0B1220;letter-spacing:-0.83px;-webkit-text-stroke:0.5px #0B1220;white-space:nowrap">1/1</span></div>
<div class="t" style="left:2252.60px;top:896px;font-size:29px;line-height:29px;color:#1F4DB4;font-weight:400;letter-spacing:0.567px;-webkit-text-stroke:0.65px #1F4DB4;">View</div>
<div style="position:absolute;left:38px;top:952px;width:2340px;height:2px;box-sizing:border-box;background:#E3E8F2"></div>
<div style="position:absolute;left:54px;top:981px;width:32px;height:32px;box-sizing:border-box;background:#CAD3E2;border-radius:7px"></div>
<div class="t" style="left:140.90px;top:984px;font-size:29px;line-height:29px;color:#1D2A3E;font-weight:400;letter-spacing:1.875px;">3/17/25</div>
<div style="position:absolute;left:290px;top:954px;width:726px;height:86px;overflow:hidden"><div class="t" style="left:14.70px;top:30px;font-size:29px;line-height:29px;color:#1F4DB4;font-weight:400;-webkit-text-stroke:0.65px #1F4DB4;letter-spacing:0.387px">Suspicious Lsass Process Access</div></div>
<svg style="position:absolute;left:1050px;top:985px;" width="28" height="20" viewBox="0 0 28 20" fill="none"><path d="M2.6 7.6 L11 16 L25 2" stroke="#6BB59A" stroke-width="1.9" stroke-linecap="round" stroke-linejoin="round"/></svg>
<div class="t" style="left:1088.00px;top:981px;font-size:29px;line-height:29px;color:#1D2A3E;font-weight:400;letter-spacing:0.375px;">Installed</div>
<div class="t" style="left:1328.40px;top:984px;font-size:29px;line-height:29px;color:#1D2A3E;font-weight:400;letter-spacing:1.900px;">47</div>
<div style="position:absolute;left:1521px;top:984.0px;width:16px;height:16px;border-radius:50%;background:#D6C35E"></div>
<div class="t" style="left:1553.20px;top:979px;font-size:29px;line-height:29px;color:#1D2A3E;font-weight:400;letter-spacing:0.360px;">Medium</div>
<svg style="position:absolute;left:1737px;top:982px;" width="31" height="31" viewBox="0 0 31 31" fill="none"><path d="M18 0.1 C13 0.1 10.3 4.5 10.3 9.3 C10.3 10.8 10.8 12 11.3 12.6 L18.2 15.7 L25.9 9.8 C26.4 4.5 22.8 0.1 18 0.1 Z" fill="#F3C447"/><path d="M4.4 4.4 C5.2 3.3 6.2 2.9 7.2 2.9 L9.8 3.4 L9 8.8 L4.2 7.8 C4 6.5 4.1 5 4.4 4.4 Z" fill="#DF5A96"/><path d="M3.4 9.3 L9 10.6 C10.3 11.2 10.2 12.2 9.8 12.8 L3.4 18.8 C1.2 17.5 0.1 15.5 0.1 13.9 C0.1 11.5 1.5 9.5 3.4 9.3 Z" fill="#51A6EC"/><path d="M11.6 14.2 L18.2 17.4 C19.5 18.3 19.9 19.5 19.8 20.5 L19.3 25 C19 28 15.5 29.8 11.6 29.8 C8.5 29.8 5.5 27.8 4.5 25.5 C3.8 23.5 3.8 21.5 4.0 20.2 Z" fill="#57B9B3"/><path d="M26.4 11.1 C28 11.8 29.7 13.5 29.7 15.4 C29.7 18 28 20 26.4 20.6 L21.8 19.6 C20.5 19.2 19.8 17.8 20.2 16.6 Z" fill="#3578C9"/><path d="M21 21.3 L25.9 22.4 C26.2 24.5 24.8 26.7 22.5 26.7 L20.2 26.6 Z" fill="#9BC63F"/></svg>
<div class="t" style="left:1783.00px;top:984px;font-size:29px;line-height:29px;color:#1D2A3E;font-weight:400;letter-spacing:0.350px;">Elastic</div>
<div style="position:absolute;left:2049px;top:980px;height:40px;transform:translateX(-50%);box-sizing:border-box;border:2px solid #C9D1E0;border-radius:8px;background:#fff;display:flex;align-items:center;padding:0 16px 0 16px"><svg width="22" height="23" viewBox="0 0 22 23" fill="none" style="display:block;flex:none"><g stroke="#0B1628" stroke-width="1.8" stroke-linejoin="round" stroke-linecap="round"><path d="M1.3 6.2 L11 1.2 L20.7 6.2 V16.3 L11 21.1 L1.3 16.3 Z"/><path d="M1.3 6.2 L11 10.8 L20.7 6.2 M11 10.8 V21.1 M6.2 8.5 L15.3 3.7 M6.2 8.5 V13"/></g></svg><span style="display:block;margin-left:9.5px;font-size:25px;line-height:25px;height:25px;position:relative;top:0.5px;color:#0B1220;letter-spacing:0.5px;-webkit-text-stroke:0.5px #0B1220;white-space:nowrap">0/1</span></div>
<div class="t" style="left:2252.60px;top:984px;font-size:29px;line-height:29px;color:#1F4DB4;font-weight:400;letter-spacing:0.567px;-webkit-text-stroke:0.65px #1F4DB4;">View</div>
<div style="position:absolute;left:38px;top:1040px;width:2340px;height:2px;box-sizing:border-box;background:#E3E8F2"></div>
<div style="position:absolute;left:54px;top:1067px;width:32px;height:32px;box-sizing:border-box;border:2px solid #8796B2;border-radius:7px;background:#fff"></div>
<div class="t" style="left:140.90px;top:1069px;font-size:29px;line-height:29px;color:#1D2A3E;font-weight:400;letter-spacing:1.875px;">3/17/25</div>
<div style="position:absolute;left:290px;top:1042px;width:726px;height:81px;overflow:hidden"><div class="t" style="left:14.70px;top:27px;font-size:29px;line-height:29px;color:#1F4DB4;font-weight:400;-webkit-text-stroke:0.65px #1F4DB4;letter-spacing:0.418px">sysmon_detect_applocker_file_block</div></div>
<div style="position:absolute;left:1056px;top:1069.5px;width:16px;height:16px;border-radius:50%;background:#6DB39A"></div>
<div class="t" style="left:1088.60px;top:1064px;font-size:29px;line-height:29px;color:#1D2A3E;font-weight:400;letter-spacing:0.344px;">Translated</div>
<div class="t" style="left:1327.80px;top:1069px;font-size:29px;line-height:29px;color:#1D2A3E;font-weight:400;letter-spacing:0.800px;">21</div>
<div style="position:absolute;left:1521px;top:1069.5px;width:16px;height:16px;border-radius:50%;background:#6DB39A"></div>
<div class="t" style="left:1553.20px;top:1064px;font-size:29px;line-height:29px;color:#1D2A3E;font-weight:400;letter-spacing:0.300px;">Low</div>
<div class="t" style="left:1736.00px;top:1069px;font-size:29px;line-height:29px;color:#1D2A3E;font-weight:400;letter-spacing:0.620px;">Custom</div>
<div style="position:absolute;left:2049px;top:1066px;height:40px;transform:translateX(-50%);box-sizing:border-box;border:2px solid #C9D1E0;border-radius:8px;background:#fff;display:flex;align-items:center;padding:0 16px 0 16px"><svg width="22" height="23" viewBox="0 0 22 23" fill="none" style="display:block;flex:none"><g stroke="#0B1628" stroke-width="1.8" stroke-linejoin="round" stroke-linecap="round"><path d="M1.3 6.2 L11 1.2 L20.7 6.2 V16.3 L11 21.1 L1.3 16.3 Z"/><path d="M1.3 6.2 L11 10.8 L20.7 6.2 M11 10.8 V21.1 M6.2 8.5 L15.3 3.7 M6.2 8.5 V13"/></g></svg><span style="display:block;margin-left:9.5px;font-size:25px;line-height:25px;height:25px;position:relative;top:0.5px;color:#0B1220;letter-spacing:0.5px;-webkit-text-stroke:0.5px #0B1220;white-space:nowrap">0/1</span></div>
<div class="t" style="left:2244.00px;top:1069px;font-size:29px;line-height:29px;color:#1F4DB4;font-weight:400;letter-spacing:0.817px;-webkit-text-stroke:0.65px #1F4DB4;">Install</div>
<div style="position:absolute;left:38px;top:1123px;width:2340px;height:2px;box-sizing:border-box;background:#E3E8F2"></div>
<div style="position:absolute;left:54px;top:1150px;width:32px;height:32px;box-sizing:border-box;border:2px solid #8796B2;border-radius:7px;background:#fff"></div>
<div class="t" style="left:140.90px;top:1153px;font-size:29px;line-height:29px;color:#1D2A3E;font-weight:400;letter-spacing:1.875px;">3/17/25</div>
<div style="position:absolute;left:290px;top:1125px;width:726px;height:82px;overflow:hidden"><div class="t" style="left:14.70px;top:28px;font-size:29px;line-height:29px;color:#1F4DB4;font-weight:400;-webkit-text-stroke:0.65px #1F4DB4;letter-spacing:0.445px">sysmon_detect_powershell_clm_bypass_powershell_via_scriptblock</div></div>
<div style="position:absolute;left:1056px;top:1153.0px;width:16px;height:16px;border-radius:50%;background:#6DB39A"></div>
<div class="t" style="left:1088.60px;top:1148px;font-size:29px;line-height:29px;color:#1D2A3E;font-weight:400;letter-spacing:0.344px;">Translated</div>
<div class="t" style="left:1327.80px;top:1153px;font-size:29px;line-height:29px;color:#1D2A3E;font-weight:400;letter-spacing:0.800px;">21</div>
<div style="position:absolute;left:1521px;top:1153.0px;width:16px;height:16px;border-radius:50%;background:#6DB39A"></div>
<div class="t" style="left:1553.20px;top:1148px;font-size:29px;line-height:29px;color:#1D2A3E;font-weight:400;letter-spacing:0.300px;">Low</div>
<div class="t" style="left:1736.00px;top:1153px;font-size:29px;line-height:29px;color:#1D2A3E;font-weight:400;letter-spacing:0.620px;">Custom</div>
<div style="position:absolute;left:2049px;top:1149px;height:40px;transform:translateX(-50%);box-sizing:border-box;border:2px solid #C9D1E0;border-radius:8px;background:#fff;display:flex;align-items:center;padding:0 16px 0 16px"><svg width="22" height="23" viewBox="0 0 22 23" fill="none" style="display:block;flex:none"><g stroke="#0B1628" stroke-width="1.8" stroke-linejoin="round" stroke-linecap="round"><path d="M1.3 6.2 L11 1.2 L20.7 6.2 V16.3 L11 21.1 L1.3 16.3 Z"/><path d="M1.3 6.2 L11 10.8 L20.7 6.2 M11 10.8 V21.1 M6.2 8.5 L15.3 3.7 M6.2 8.5 V13"/></g></svg><span style="display:block;margin-left:9.5px;font-size:25px;line-height:25px;height:25px;position:relative;top:0.5px;color:#0B1220;letter-spacing:0.5px;-webkit-text-stroke:0.5px #0B1220;white-space:nowrap">0/1</span></div>
<div class="t" style="left:2244.00px;top:1153px;font-size:29px;line-height:29px;color:#1F4DB4;font-weight:400;letter-spacing:0.817px;-webkit-text-stroke:0.65px #1F4DB4;">Install</div>
<div style="position:absolute;left:38px;top:1207px;width:2340px;height:2px;box-sizing:border-box;background:#E3E8F2"></div>
<div style="position:absolute;left:54px;top:1234px;width:32px;height:32px;box-sizing:border-box;border:2px solid #8796B2;border-radius:7px;background:#fff"></div>
<div class="t" style="left:140.90px;top:1236px;font-size:29px;line-height:29px;color:#1D2A3E;font-weight:400;letter-spacing:1.875px;">3/17/25</div>
<div style="position:absolute;left:290px;top:1209px;width:726px;height:81px;overflow:hidden"><div class="t" style="left:14.70px;top:27px;font-size:29px;line-height:29px;color:#1F4DB4;font-weight:400;-webkit-text-stroke:0.65px #1F4DB4;letter-spacing:0.405px">sysmon_detect_ntlm_hashes_extraction_masky</div></div>
<div style="position:absolute;left:1056px;top:1236.5px;width:16px;height:16px;border-radius:50%;background:#6DB39A"></div>
<div class="t" style="left:1088.60px;top:1231px;font-size:29px;line-height:29px;color:#1D2A3E;font-weight:400;letter-spacing:0.344px;">Translated</div>
<div class="t" style="left:1327.80px;top:1236px;font-size:29px;line-height:29px;color:#1D2A3E;font-weight:400;letter-spacing:0.800px;">21</div>
<div style="position:absolute;left:1521px;top:1236.5px;width:16px;height:16px;border-radius:50%;background:#6DB39A"></div>
<div class="t" style="left:1553.20px;top:1231px;font-size:29px;line-height:29px;color:#1D2A3E;font-weight:400;letter-spacing:0.300px;">Low</div>
<div class="t" style="left:1736.00px;top:1236px;font-size:29px;line-height:29px;color:#1D2A3E;font-weight:400;letter-spacing:0.620px;">Custom</div>
<div style="position:absolute;left:2049px;top:1233px;height:40px;transform:translateX(-50%);box-sizing:border-box;border:2px solid #C9D1E0;border-radius:8px;background:#fff;display:flex;align-items:center;padding:0 16px 0 16px"><svg width="22" height="23" viewBox="0 0 22 23" fill="none" style="display:block;flex:none"><g stroke="#0B1628" stroke-width="1.8" stroke-linejoin="round" stroke-linecap="round"><path d="M1.3 6.2 L11 1.2 L20.7 6.2 V16.3 L11 21.1 L1.3 16.3 Z"/><path d="M1.3 6.2 L11 10.8 L20.7 6.2 M11 10.8 V21.1 M6.2 8.5 L15.3 3.7 M6.2 8.5 V13"/></g></svg><span style="display:block;margin-left:9.5px;font-size:25px;line-height:25px;height:25px;position:relative;top:0.5px;color:#0B1220;letter-spacing:0.5px;-webkit-text-stroke:0.5px #0B1220;white-space:nowrap">0/1</span></div>
<div class="t" style="left:2244.00px;top:1236px;font-size:29px;line-height:29px;color:#1F4DB4;font-weight:400;letter-spacing:0.817px;-webkit-text-stroke:0.65px #1F4DB4;">Install</div>
<div style="position:absolute;left:38px;top:1290px;width:2340px;height:2px;box-sizing:border-box;background:#E3E8F2"></div>
<div class="t" style="left:53.60px;top:1346px;font-size:25px;line-height:25px;color:#1D2A3E;font-weight:400;letter-spacing:-0.025px;-webkit-text-stroke:0.4px #1D2A3E;">Rows per page: 10</div>
<svg style="position:absolute;left:282.7px;top:1353.2px;" width="19" height="10" viewBox="0 0 19 10" fill="none"><path d="M1.20 1.20 L9.20 8.50 L17.20 1.20" stroke="#1D2A3E" stroke-width="2.4" stroke-linecap="round" stroke-linejoin="round"/></svg>
<svg style="position:absolute;left:2005.2px;top:1345.0px;" width="14" height="26" viewBox="0 0 14 26" fill="none"><path d="M12.20 1.40 L1.40 12.75 L12.20 24.10" stroke="#1D2A3E" stroke-width="2.8" stroke-linecap="round" stroke-linejoin="round"/></svg>
<svg style="position:absolute;left:2347.0px;top:1345.0px;" width="14" height="26" viewBox="0 0 14 26" fill="none"><path d="M1.40 1.40 L12.20 12.75 L1.40 24.10" stroke="#1D2A3E" stroke-width="2.8" stroke-linecap="round" stroke-linejoin="round"/></svg>
<div class="t" style="left:2051.00px;top:1345px;font-size:29px;line-height:29px;color:#1D2A3E;font-weight:400;letter-spacing:0.000px;-webkit-text-stroke:0.4px #1D2A3E;">1</div>
<div class="t" style="left:2097.80px;top:1345px;font-size:29px;line-height:29px;color:#1D2A3E;font-weight:400;letter-spacing:0.000px;-webkit-text-stroke:0.4px #1D2A3E;">2</div>
<div class="t" style="left:2147.20px;top:1345px;font-size:29px;line-height:29px;color:#1D2A3E;font-weight:400;letter-spacing:0.000px;-webkit-text-stroke:0.4px #1D2A3E;">3</div>
<div class="t" style="left:2197.00px;top:1345px;font-size:29px;line-height:29px;color:#2463D6;font-weight:700;letter-spacing:0.000px;">4</div>
<div style="position:absolute;left:2196px;top:1373px;width:19px;height:2px;box-sizing:border-box;background:#2463D6"></div>
<div class="t" style="left:2247.80px;top:1345px;font-size:29px;line-height:29px;color:#1D2A3E;font-weight:400;letter-spacing:0.000px;-webkit-text-stroke:0.4px #1D2A3E;">5</div>
<div class="t" style="left:2296.40px;top:1345px;font-size:29px;line-height:29px;color:#1D2A3E;font-weight:400;letter-spacing:0.000px;-webkit-text-stroke:0.4px #1D2A3E;">6</div></div>
</body></html>
